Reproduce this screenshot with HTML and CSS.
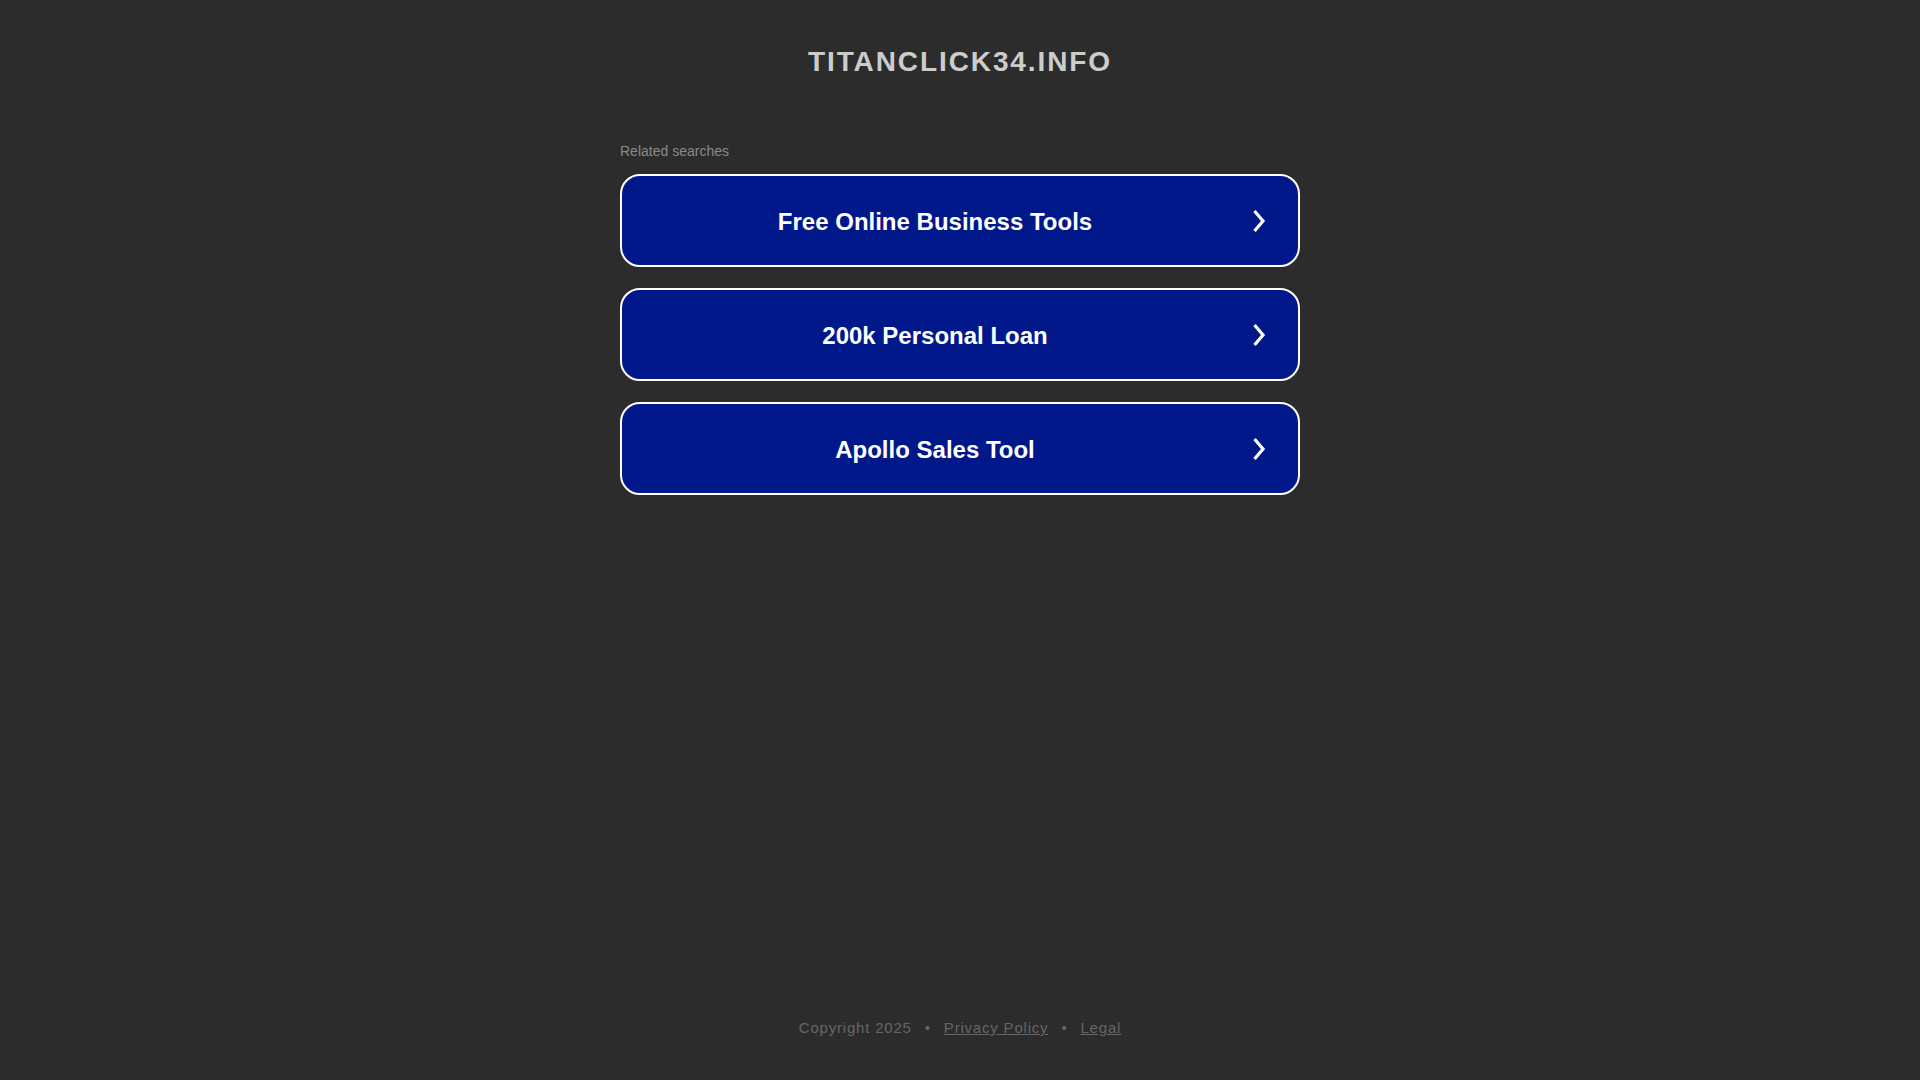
FILE: index.html
```html
<!DOCTYPE html>
<html lang="en">
<head>
<meta charset="utf-8">
<title>titanclick34.info</title>
<link rel="stylesheet" href="styles.css">
</head>
<body>
<div class="page">
  <header class="header">
    <h1 class="domain">TITANCLICK34.INFO</h1>
  </header>
  <main class="content">
    <div class="related-label">Related searches</div>
    <div class="links">
      <a class="link-box" href="#">
        <span class="link-text">Free Online Business Tools</span>
        <span class="link-arrow"><svg width="14" height="24" viewBox="0 0 14 24"><path d="M2.5 2 L11 12 L2.5 22" fill="none" stroke="#fff" stroke-width="3.2"/></svg></span>
      </a>
      <a class="link-box" href="#">
        <span class="link-text">200k Personal Loan</span>
        <span class="link-arrow"><svg width="14" height="24" viewBox="0 0 14 24"><path d="M2.5 2 L11 12 L2.5 22" fill="none" stroke="#fff" stroke-width="3.2"/></svg></span>
      </a>
      <a class="link-box" href="#">
        <span class="link-text">Apollo Sales Tool</span>
        <span class="link-arrow"><svg width="14" height="24" viewBox="0 0 14 24"><path d="M2.5 2 L11 12 L2.5 22" fill="none" stroke="#fff" stroke-width="3.2"/></svg></span>
      </a>
    </div>
  </main>
  <footer class="footer">
    <span>Copyright 2025</span>
    <span class="sep">&bull;</span>
    <a href="#">Privacy Policy</a>
    <span class="sep">&bull;</span>
    <a href="#">Legal</a>
  </footer>
</div>
</body>
</html>
```

FILE: styles.css
```css
html, body {
  margin: 0;
  padding: 0;
}
body {
  background: #2c2c2c;
  font-family: "Liberation Sans", Arial, sans-serif;
}
.page {
  min-height: 100vh;
  display: flex;
  flex-direction: column;
}
.header {
  height: 122px;
  display: flex;
  align-items: center;
  justify-content: center;
}
.domain {
  margin: 0;
  padding-top: 2px;
  font-size: 28px;
  font-weight: bold;
  letter-spacing: 1.9px;
  color: #cccccc;
  line-height: 32px;
}
.content {
  width: 680px;
  margin: 0 auto;
}
.related-label {
  padding-top: 19px;
  line-height: 20px;
  font-size: 14px;
  color: #8a8a8a;
  margin-bottom: 13px;
}
.links {
  display: flex;
  flex-direction: column;
  gap: 21px;
}
.link-box {
  box-sizing: border-box;
  height: 93px;
  display: flex;
  align-items: center;
  padding: 0 19px 0 9px;
  background: #01188b;
  border: 2px solid #ffffff;
  border-radius: 20px;
  text-decoration: none;
  color: #ffffff;
}
.link-text {
  flex: 1;
  text-align: center;
  font-size: 24px;
  font-weight: bold;
  line-height: 28px;
  padding-top: 2px;
}
.link-arrow {
  width: 40px;
  display: flex;
  justify-content: center;
  align-items: center;
  padding-top: 1px;
}
.link-arrow svg {
  display: block;
}
.footer {
  margin-top: auto;
  padding-bottom: 42px;
  display: flex;
  justify-content: center;
  align-items: center;
  line-height: 20px;
  font-size: 15px;
  letter-spacing: 0.8px;
  color: #666666;
}
.footer a {
  color: #666666;
}
.sep {
  margin: 0 13px;
}
```
